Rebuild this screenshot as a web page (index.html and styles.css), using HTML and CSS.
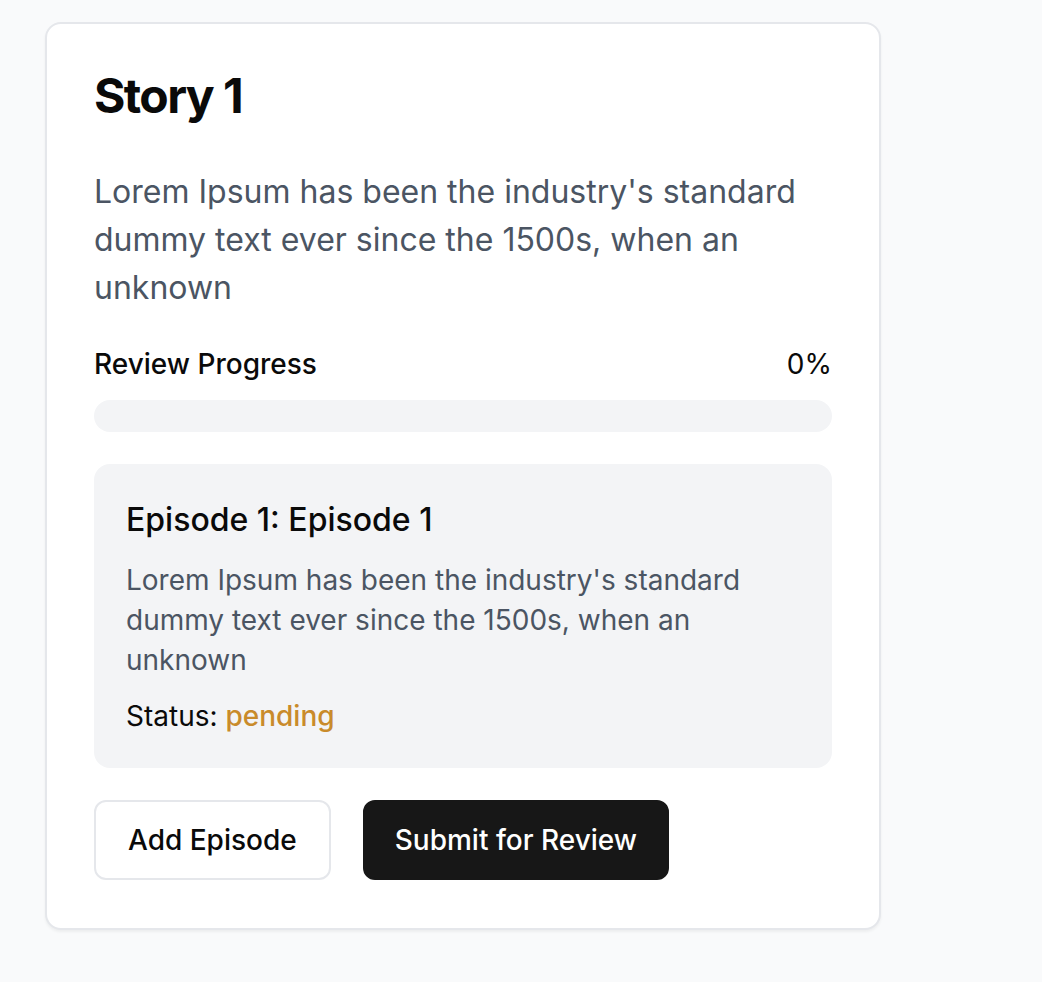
FILE: index.html
```html
<!DOCTYPE html>
<html lang="en">
<head>
<meta charset="utf-8">
<title>Story 1</title>
<link rel="stylesheet" href="styles.css">
</head>
<body>
<main class="page">
  <section class="card">
    <h1 class="title">Story 1</h1>
    <p class="desc">Lorem Ipsum has been the industry's standard dummy text ever since the 1500s, when an unknown</p>
    <div class="progress-head">
      <span class="progress-label">Review Progress</span>
      <span class="progress-value">0%</span>
    </div>
    <div class="progress-track"><div class="progress-fill" style="width:0%"></div></div>
    <div class="episode">
      <h2 class="episode-title">Episode 1: Episode 1</h2>
      <p class="episode-desc">Lorem Ipsum has been the industry's standard dummy text ever since the 1500s, when an unknown</p>
      <p class="episode-status">Status: <span class="pending">pending</span></p>
    </div>
    <div class="actions">
      <button class="btn btn-outline">Add Episode</button>
      <button class="btn btn-dark">Submit for Review</button>
    </div>
  </section>
</main>
</body>
</html>
```

FILE: styles.css
```css
* { box-sizing: border-box; }

html, body {
  margin: 0;
  padding: 0;
  background: #f9fafb;
  font-family: Inter, "Noto Sans", "Liberation Sans", sans-serif;
  color: #0a0a0a;
}

.page {
  padding: 22px 0 0 45px;
  min-height: 982px;
}

.card {
  width: 836px;
  background: #ffffff;
  border: 2px solid #e5e7eb;
  border-radius: 16px;
  padding: 48px 47px 48px 47px;
  box-shadow: 0 2px 3px rgba(0, 0, 0, 0.05);
}

.title {
  margin: 0 0 48px 0;
  font-size: 48px;
  line-height: 48px;
  font-weight: 700;
  letter-spacing: -1.6px;
  color: #0a0a0a;
}

.desc {
  margin: 0 0 32px 0;
  font-size: 32px;
  line-height: 48px;
  color: #4b5563;
}

.progress-head {
  display: flex;
  justify-content: space-between;
  font-size: 28px;
  line-height: 40px;
  font-weight: 500;
  margin-bottom: 16px;
}

.progress-value { font-weight: 400; }

.progress-track {
  height: 32px;
  border-radius: 9999px;
  background: #f3f4f6;
  overflow: hidden;
  margin-bottom: 32px;
}

.progress-fill {
  height: 100%;
  background: #171717;
}

.episode {
  background: #f3f4f6;
  border-radius: 16px;
  padding: 32px;
  margin-bottom: 32px;
}

.episode-title {
  margin: 0 0 16px 0;
  font-size: 32px;
  line-height: 48px;
  font-weight: 500;
}

.episode-desc {
  margin: 0 0 16px 0;
  font-size: 28px;
  line-height: 40px;
  color: #4b5563;
}

.episode-status {
  margin: 0;
  font-size: 28px;
  line-height: 40px;
}

.pending {
  color: #c98b2b;
  font-weight: 500;
}

.actions {
  display: flex;
  gap: 32px;
}

.btn {
  font-family: inherit;
  font-size: 28px;
  line-height: 40px;
  font-weight: 500;
  padding: 18px 32px;
  border-radius: 12px;
  border: 2px solid #e5e7eb;
  cursor: pointer;
}

.btn-outline {
  background: #ffffff;
  color: #0a0a0a;
}

.btn-dark {
  background: #171717;
  border-color: #171717;
  color: #ffffff;
  padding: 18px 30px;
}
```
